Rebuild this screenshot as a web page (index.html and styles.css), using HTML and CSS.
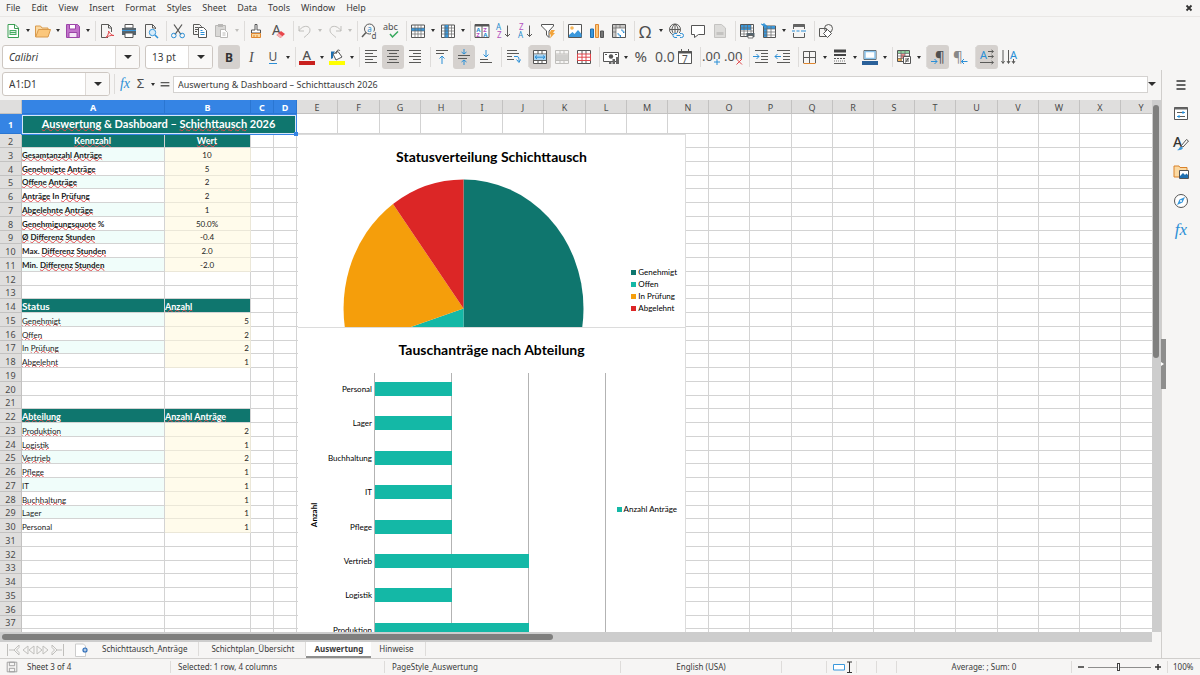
FILE: index.html
```
<!DOCTYPE html>
<html lang="en">
<head>
    <meta charset="UTF-8">
    <meta name="viewport" content="width=device-width, initial-scale=1.0">
    <title>Auswertung</title>
    <link rel="stylesheet" href="styles.css">
</head>
<body>

<nav class="menubar">
    <button>File</button>
    <button>Edit</button>
    <button>View</button>
    <button>Insert</button>
    <button>Format</button>
    <button>Styles</button>
    <button>Sheet</button>
    <button>Data</button>
    <button>Tools</button>
    <button>Window</button>
    <button>Help</button>
    <button class="close" aria-label="Close"><svg viewBox="0 0 8 8"><path class="k" d="M1.500 1.500l5 5M6.500 1.500l-5 5" stroke-width="1.800"/></svg></button>
</nav>

<!-- standard toolbar -->
<div class="toolbar">
    <button class="tool" aria-label="New"><svg viewBox="0 0 16 16"><path d="M3 1.500h7l3.500 3.500v9.500H3z" fill="#fff" stroke="#3c9f55"/><path d="M9.500 1.500v4h4" fill="none" stroke="#3c9f55"/><path d="M4.500 7h7v5h-7z" fill="#46ad62"/><path d="M5.500 8.500h5M5.500 10.500h5" stroke="#fff" stroke-width=".8"/></svg></button><button class="drop" aria-label="New menu"></button>
    <button class="tool" aria-label="Open"><svg viewBox="0 0 16 16"><path d="M.500 14V3h5l1.500 2h6v2" fill="#fbd9a2" stroke="#d99a4c"/><path d="M.700 14L3.500 6.500h12L13 14z" fill="#fbc77c" stroke="#d99a4c"/></svg></button><button class="drop" aria-label="Open menu"></button>
    <button class="tool" aria-label="Save"><svg viewBox="0 0 16 16"><path d="M1.500 1.500h11l2 2v11h-13z" fill="#c273cb" stroke="#9c45a8"/><path d="M4.500 1.500h6v4.500h-6z" fill="#fff" stroke="#9c45a8"/><path d="M4 9.500h8v5H4z" fill="#f5e5f7" stroke="#9c45a8"/></svg></button><button class="drop" aria-label="Save menu"></button>
    <i class="sep"></i>
    <button class="tool" aria-label="Export as PDF"><svg viewBox="0 0 16 16"><path class="g" d="M9 14.500H2.500v-13h7l3 3V9M9.500 1.500v3.500h3"/><path d="M7 14.500c2-2 3-5 2.500-6.500C11 11 13 12.500 15 12.500c-3-.500-6 .500-8 2z" fill="none" stroke="#e0474c"/></svg></button>
    <button class="tool" aria-label="Print"><svg viewBox="0 0 16 16"><path d="M4 1.500h8V5H4z" fill="#fff" stroke="#555"/><path d="M1 5h14v7H1z" fill="#56646d"/><path d="M1 7.500h14" stroke="#3a98dc"/><path d="M4 10h8v4.500H4z" fill="#fff" stroke="#555"/></svg></button>
    <button class="tool" aria-label="Print Preview"><svg viewBox="0 0 16 16"><path class="g" d="M12.500 6V4.500l-3-3h-7v13H8M9.500 1.500v3.500h3"/><circle cx="9.500" cy="9.500" r="3.200" fill="#d7ecfa" stroke="#3a98dc"/><path class="b" d="M12 12l3 3" stroke-width="1.500"/></svg></button>
    <i class="sep"></i>
    <button class="tool" aria-label="Cut"><svg viewBox="0 0 16 16"><path class="g" d="M4 1.500l7 10M12 1.500L5 11.500" stroke-width="1.300"/><circle class="b" cx="3.800" cy="12.500" r="2.300"/><circle class="b" cx="12.200" cy="12.500" r="2.300"/></svg></button>
    <button class="tool" aria-label="Copy"><svg viewBox="0 0 16 16"><path class="g" d="M6 11.500H1.500v-10h6l2 2V4M3 4.500h3M3 6.500h3M3 8.500h2"/><path d="M6.500 4.500h5l3 3v7h-8z" fill="#fff" stroke="#555"/><path class="b" d="M8.500 9.500h4M8.500 11.500h4M8.500 7.500h2"/></svg></button>
    <button class="tool" aria-label="Paste" disabled><svg viewBox="0 0 16 16"><path d="M1.500 2.500h10v11h-10z" fill="#d9d8d6" stroke="#b9b8b6"/><path d="M4 1h5v3H4z" fill="#b9b8b6"/><path d="M6.500 6.500h4l3 3v5h-7z" fill="#fff" stroke="#b9b8b6"/><path d="M8.500 10h3M8.500 12h3" stroke="#b9b8b6"/></svg></button><button class="drop off" aria-label="Paste menu" disabled></button>
    <i class="sep"></i>
    <button class="tool" aria-label="Clone Formatting"><svg viewBox="0 0 16 16"><path d="M7 1.500h2V7h3.500v3h-9V7H7z" fill="#fff" stroke="#555"/><path d="M3.500 10.500h9v4h-9z" fill="#fbd9a2" stroke="#e0872f"/><path d="M6 12v2M9 12v2" stroke="#e0872f"/></svg></button>
    <button class="tool" aria-label="Clear Formatting"><svg viewBox="0 0 16 16"><text class="h" x="2" y="12" font-size="14">A</text><path d="M6.500 12l4.500-4 4 3-4.500 4z" fill="#e8474c"/><path d="M6.500 12l2-1.700 4 3-2 1.700z" fill="#f7b0b2"/></svg></button>
    <i class="sep"></i>
    <button class="tool" aria-label="Undo" disabled><svg viewBox="0 0 16 16"><path class="o" d="M2 3v5h5M2 8c3-6 11-6 11-1 0 3-2 4-6 7.500"/></svg></button><button class="drop off" aria-label="Undo menu" disabled></button>
    <button class="tool" aria-label="Redo" disabled><svg viewBox="0 0 16 16"><path class="o" d="M14 3v5H9M14 8C11 2 3 2 3 7c0 3 2 4 6 7.500"/></svg></button><button class="drop off" aria-label="Redo menu" disabled></button>
    <i class="sep"></i>
    <button class="tool" aria-label="Find and Replace"><svg viewBox="0 0 16 16"><circle class="g" cx="8.500" cy="6" r="5"/><path class="g" d="M5 9.500l-4 4.500" stroke-width="1.500"/><text x="6.200" y="8.500" font-size="8" fill="#1e8bcd">a</text><path d="M10 8.500h6V16h-6z" fill="#f6f5f4"/><text class="h" x="10.500" y="15.500" font-size="8">d</text></svg></button>
    <button class="tool" aria-label="Spelling"><svg viewBox="0 0 16 16"><text class="h" x="0" y="7" font-size="9">abc</text><path d="M7 11l2.500 3L15 8.500" fill="none" stroke="#35a85c" stroke-width="1.500"/></svg></button>
    <i class="sep"></i>
    <button class="tool" aria-label="Row"><svg viewBox="0 0 16 16"><path d="M1.500 2h13v12.500h-13z" fill="#fff" stroke="#555"/><path d="M1.500 5h13v3h-13z" fill="#3a98dc"/><path class="t" d="M1.500 5h13M1.500 8h13M1.500 11h13M5 2v12.500M8 2v12.500M11 2v12.500"/></svg></button><button class="drop" aria-label="Row menu"></button>
    <button class="tool" aria-label="Column"><svg viewBox="0 0 16 16"><path d="M1.500 2h13v12.500h-13z" fill="#fff" stroke="#555"/><path d="M4.500 2h4v12.500h-4z" fill="#3a98dc"/><path class="t" d="M1.500 5h13M1.500 8h13M1.500 11h13M5 2v12.500M8.500 2v12.500M11.500 2v12.500"/></svg></button><button class="drop" aria-label="Column menu"></button>
    <i class="sep"></i>
    <button class="tool" aria-label="Sort"><svg viewBox="0 0 16 16"><path d="M1 1.500h14v13H1z" fill="#fff" stroke="#555"/><path d="M1 1h14v2.500H1z" fill="#555"/><path class="g" d="M8 3v12"/><g font-size="6" font-weight="bold"><text x="2.300" y="8.800" fill="#1e8bcd">A</text><text x="2.300" y="14" fill="#b452be">Z</text><text x="9.300" y="8.800" fill="#b452be">Z</text><text x="9.300" y="14" fill="#1e8bcd">A</text></g></svg></button>
    <button class="tool" aria-label="Sort Ascending"><svg viewBox="0 0 16 16"><text x="0" y="7" font-size="8" fill="#1e8bcd">A</text><text x="1" y="15" font-size="8" fill="#b452be">Z</text><path class="g" d="M11.500 2.500v11M9 11l2.500 2.500L14 11"/></svg></button>
    <button class="tool" aria-label="Sort Descending"><svg viewBox="0 0 16 16"><text x="1" y="7" font-size="8" fill="#b452be">Z</text><text x="0" y="15" font-size="8" fill="#1e8bcd">A</text><path class="g" d="M11.500 2.500v11M9 11l2.500 2.500L14 11"/></svg></button>
    <button class="tool" aria-label="AutoFilter"><svg viewBox="0 0 16 16"><path d="M1.500 1.500h12V3L9 8v6.500L6.500 12V8l-5-5z" fill="#fff" stroke="#555"/><path d="M11 7h4l-2 3h2l-5 5.500 1-4H9z" fill="#f2a33a"/></svg></button>
    <i class="sep"></i>
    <button class="tool" aria-label="Image"><svg viewBox="0 0 16 16"><path d="M1.500 1.500h13v13h-13z" fill="#fff" stroke="#555"/><circle cx="5" cy="5" r="1.800" fill="#f7b75c"/><path d="M2 14v-2l3.500-3 2 2L11 7l3.500 4v3z" fill="#3a98dc"/></svg></button>
    <button class="tool" aria-label="Chart"><svg viewBox="0 0 16 16"><path d="M1.500 6h3v8.500h-3z" fill="#3a98dc" stroke="#1e6fb0"/><path d="M6.500 1.500h3v13h-3z" fill="#fbc77c" stroke="#e0872f"/><path d="M11.500 8h3v6.500h-3z" fill="#777" stroke="#555"/></svg></button>
    <button class="tool" aria-label="Pivot Table"><svg viewBox="0 0 16 16"><path d="M1.500 1.500h13v13h-13z" fill="#fff" stroke="#555"/><path d="M2 2h12v3H5v9H2z" fill="#c9c8c6"/><path class="t" d="M5 1.500v13M1.500 5h13M1.500 9h3.500M9 1.500V5"/><path class="b" d="M7 10c0 2 1 3 3 3M8.500 11.500L10 13l-1.500 1.500M10 7c2 0 3 1 3 3M11.500 8.500L13 10"/></svg></button>
    <i class="sep"></i>
    <button class="tool" aria-label="Special Character"><svg viewBox="0 0 16 16"><text class="h" x="1" y="14.500" font-size="17">Ω</text></svg></button><button class="drop" aria-label="Special Character menu"></button>
    <button class="tool" aria-label="Hyperlink"><svg viewBox="0 0 16 16"><circle class="g" cx="7" cy="6.500" r="5.500"/><path class="g" d="M1.500 6.500h11M7 1v11M7 1C3 4 3 9 7 12M7 1c4 3 4 8 0 11"/><path d="M5 10h11v5H5z" fill="#f6f5f4"/><path class="b" d="M9 10.500H7a2 2 0 000 4h2M12 10.500h1.500a2 2 0 010 4H12M8.500 12.500h4"/></svg></button>
    <button class="tool" aria-label="Comment"><svg viewBox="0 0 16 16"><path d="M1.500 2.500h13v9H8.500l-4 3v-3h-3z" fill="#fff" stroke="#555"/></svg></button>
    <button class="tool" aria-label="Headers and Footers" disabled><svg viewBox="0 0 16 16"><path d="M2.500 1.500h7l4 3.500v9.500h-11z" fill="#dddcda" stroke="#c4c3c1"/><path d="M4.500 9h7v3h-7z" fill="#c4c3c1"/></svg></button>
    <i class="sep"></i>
    <button class="tool" aria-label="Define Print Area"><svg viewBox="0 0 16 16"><path d="M1.500 1.500h13v12h-13z" fill="#fff" stroke="#555"/><path d="M2 2h10v5H2z" fill="#3a98dc"/><path class="t" d="M1.500 5h13M1.500 8h13M1.500 11h13M5 1.500v12M8.500 1.500v12M12 1.500v12"/><path d="M7.500 10h8v4h-8z" fill="#56646d"/><path d="M9 12.500h5V15H9z" fill="#fff" stroke="#555" stroke-width=".8"/></svg></button>
    <button class="tool" aria-label="Freeze Rows and Columns"><svg viewBox="0 0 16 16"><path d="M2.500 3h12v11.500h-12z" fill="#fff" stroke="#555"/><path d="M3 3h11v3H6v8H3z" fill="#3a98dc"/><path class="t" d="M2.500 6h12M2.500 9h12M2.500 12h12M6 3v11.500M10 3v11.500"/><path class="b" d="M3 0v4M1 2h4M0 1l6 2"/></svg></button><button class="drop" aria-label="Freeze menu"></button>
    <button class="tool" aria-label="Split Window"><svg viewBox="0 0 16 16"><path class="g" d="M2.500 6V1.500h11V6M2.500 10v4.500h11V10"/><path d="M2.500 1.500h11V4h-11z" fill="#666"/><path class="b" d="M1 8h3M5.500 8h3M10 8h5"/></svg></button>
    <i class="sep"></i>
    <button class="tool" aria-label="Show Draw Functions"><svg viewBox="0 0 16 16"><path class="g" d="M1.500 5.500h7v8h-7z"/><circle class="g" cx="10.500" cy="5.500" r="4"/><path d="M9.500 6.500l4 4-4 4-4-4z" fill="#fff" stroke="#555"/></svg></button>
</div>

<!-- formatting toolbar -->
<div class="toolbar">
    <div class="combo font-name"><input type="text" value="Calibri" aria-label="Font Name"><button aria-label="Font list"></button></div>
    <div class="combo font-size"><input type="text" value="13 pt" aria-label="Font Size"><button aria-label="Size list"></button></div>
    <button class="tool on" aria-label="Bold"><svg viewBox="0 0 16 16"><text x="4" y="12.500" font-size="12" font-weight="bold" fill="#333">B</text></svg></button>
    <button class="tool" aria-label="Italic"><svg viewBox="0 0 16 16"><text class="h serif" x="6" y="12.500" font-size="14" font-style="italic">I</text></svg></button>
    <button class="tool" aria-label="Underline"><svg viewBox="0 0 16 16"><text class="h" x="3.500" y="12" font-size="12">U</text><path class="b" d="M4 14.500h8"/></svg></button><button class="drop" aria-label="Underline menu"></button>
    <i class="sep"></i>
    <button class="tool" aria-label="Font Color"><svg viewBox="0 0 16 16"><text class="h" x="3.500" y="10.500" font-size="13" font-weight="500">A</text><path d="M0 12h16v4H0z" fill="#c9211e"/></svg></button><button class="drop" aria-label="Font Color menu"></button>
    <button class="tool" aria-label="Background Color"><svg viewBox="0 0 16 16"><path d="M4 5l5-2.500L13 8l-6 3z" fill="#fff" stroke="#555"/><path class="g" d="M7 5c0-4 3-5 4-3"/><path d="M2 2.500h4L4 5v4L2 10z" fill="#1e6fb0"/><path d="M0 12h16v4H0z" fill="#ffff00"/></svg></button><button class="drop" aria-label="Background Color menu"></button>
    <i class="sep"></i>
    <button class="tool" aria-label="Align Left"><svg viewBox="0 0 16 16"><path class="g" d="M2 1.500h12M2 4.500h8M2 7.500h12M2 10.500h8M2 13.500h12"/></svg></button>
    <button class="tool on" aria-label="Align Center"><svg viewBox="0 0 16 16"><path class="g" d="M2 1.500h12M4 4.500h8M2 7.500h12M4 10.500h8M2 13.500h12"/></svg></button>
    <button class="tool" aria-label="Align Right"><svg viewBox="0 0 16 16"><path class="g" d="M2 1.500h12M6 4.500h8M2 7.500h12M6 10.500h8M2 13.500h12"/></svg></button>
    <i class="sep"></i>
    <button class="tool" aria-label="Align Top"><svg viewBox="0 0 16 16"><path class="g" d="M2 1.500h12M2 4.500h8"/><path class="b" d="M8 15V7M5.500 9.500L8 7l2.500 2.500"/></svg></button>
    <button class="tool on" aria-label="Center Vertically"><svg viewBox="0 0 16 16"><path class="g" d="M2 6.500h12M2 9.500h9"/><path class="b" d="M8 0v5M5.500 3L8 5l2.500-2M8 16v-5M5.500 13L8 11l2.500 2"/></svg></button>
    <button class="tool" aria-label="Align Bottom"><svg viewBox="0 0 16 16"><path class="g" d="M2 10.500h8M2 13.500h12"/><path class="b" d="M8 1v7M5.500 5.500L8 8l2.500-2.500"/></svg></button>
    <i class="sep"></i>
    <button class="tool" aria-label="Wrap Text"><svg viewBox="0 0 16 16"><path class="g" d="M2 1.500h10M2 4.500h12M2 7.500h5M2 10.500h7"/><path class="b" d="M9 7.500h3c2 0 2 2 2 5M11.500 10.500l2.500 3 1.500-3"/></svg></button>
    <i class="sep"></i>
    <button class="tool on" aria-label="Merge and Center Cells"><svg viewBox="0 0 16 16"><path d="M1.500 1.500h13v13h-13z" fill="#fff" stroke="#555"/><path class="g" d="M1.500 5h13M1.500 11.500h13M6 1.500V5M10 1.500V5M6 11.500v3M10 11.500v3"/><path d="M2 5.500h12v5.500H2z" fill="#a9d5f3"/><path class="b" d="M3 8.200h10M5 6.500L3 8.200 5 10M11 6.500l2 1.700L11 10"/></svg></button>
    <button class="tool" aria-label="Merge Cells" disabled><svg viewBox="0 0 16 16"><path class="o" d="M1.500 1.500h13v13h-13zM1.500 5h13M1.500 11.500h13M6 1.500V5M10 1.500V5M6 11.500v3M10 11.500v3"/><path d="M2 5.500h12v5.500H2z" fill="#d0cfcd"/></svg></button>
    <button class="tool" aria-label="Unmerge Cells"><svg viewBox="0 0 16 16"><path d="M1.500 1.500h13v13h-13z" fill="#fff" stroke="#555"/><path class="g" d="M6 1.500V5M10 1.500V5M6 11.500v3M10 11.500v3"/><path d="M1.500 5h13v6.500h-13zM6 5v6.500M10 5v6.500M1.500 8.200h13" fill="none" stroke="#e0474c"/></svg></button>
    <i class="sep"></i>
    <button class="tool" aria-label="Currency"><svg viewBox="0 0 16 16"><path d="M.500 3.500h15v9H.500z" fill="#fff" stroke="#555"/><circle cx="8" cy="7.500" r="2.200" fill="#555"/><path class="g" d="M2 5.500h2M12 5.500h2"/><path d="M9.500 10h2.500v5H9.500zM13 8h3v7h-3zM6 12h2.500v3H6z" fill="#666"/></svg></button><button class="drop" aria-label="Currency menu"></button>
    <button class="tool" aria-label="Percent"><svg viewBox="0 0 16 16"><text class="h" x="1.500" y="13" font-size="15">%</text></svg></button>
    <button class="tool" aria-label="Number"><svg viewBox="0 0 16 16"><text class="h" x="0" y="13" font-size="14" font-family="Open Sans">0.0</text></svg></button>
    <button class="tool" aria-label="Date"><svg viewBox="0 0 16 16"><path d="M1.500 2.500h13v12h-13z" fill="#fff" stroke="#555"/><path d="M1.500 2h13v2.500h-13z" fill="#555"/><path class="g" d="M4.500 0v3M11.500 0v3"/><text class="h" x="5" y="13.500" font-size="10">7</text></svg></button>
    <i class="sep"></i>
    <button class="tool" aria-label="Add Decimal Place"><svg viewBox="0 0 16 16"><text class="h" x="-2" y="12" font-size="13">.00</text><path d="M10 10h6v6h-6z" fill="#f6f5f4"/><path class="b" d="M13 10v6M10 13h6"/></svg></button>
    <button class="tool" aria-label="Delete Decimal Place"><svg viewBox="0 0 16 16"><text class="h" x="-2" y="12" font-size="13">.00</text><path d="M10 10h6v6h-6z" fill="#f6f5f4"/><path d="M10.500 10l5.500 5.500M16 10l-5.500 5.500" stroke="#e0474c"/></svg></button>
    <i class="sep"></i>
    <button class="tool" aria-label="Increase Indent"><svg viewBox="0 0 16 16"><path class="g" d="M2 1.500h13M8 4.500h7M8 7.500h7M8 10.500h7M2 13.500h13"/><path class="b" d="M0 7.500h6M3.500 5L6 7.500 3.500 10"/></svg></button>
    <button class="tool" aria-label="Decrease Indent"><svg viewBox="0 0 16 16"><path class="g" d="M2 1.500h13M8 4.500h7M8 7.500h7M8 10.500h7M2 13.500h13"/><path class="b" d="M0 7.500h6M2.500 5L0 7.500 2.500 10"/></svg></button>
    <i class="sep"></i>
    <button class="tool" aria-label="Borders"><svg viewBox="0 0 16 16"><path class="g" d="M1.500 14V2.500h12V14M7.500 2.500v12M1.500 8.500h12"/><path d="M1.500 14.500h12" stroke="#e0872f"/></svg></button><button class="drop" aria-label="Borders menu"></button>
    <button class="tool" aria-label="Border Style"><svg viewBox="0 0 16 16"><path d="M2 2h12" stroke="#444" stroke-width="3"/><path d="M2 6h12" stroke="#444" stroke-width="2"/><path d="M2 9.500h12" stroke="#555" stroke-dasharray="2 1"/><path class="g" d="M2 14.500h12"/><path d="M2 12h12" stroke="#777" stroke-dasharray="1 1"/></svg></button><button class="drop" aria-label="Border Style menu"></button>
    <button class="tool" aria-label="Border Color"><svg viewBox="0 0 16 16"><path d="M2 1.500h12v9H2z" fill="#fff" stroke="#555"/><path d="M3 2.500h10v7H3z" fill="none" stroke="#8cc4ec" stroke-width="1.500"/><path d="M0 12h16v4H0z" fill="#2a6099"/></svg></button><button class="drop" aria-label="Border Color menu"></button>
    <i class="sep"></i>
    <button class="tool" aria-label="Conditional Formatting"><svg viewBox="0 0 16 16"><path d="M1.500 1.500h12v11h-12z" fill="#fff" stroke="#555"/><path d="M2 2h11v2.500H2z" fill="#8fd0a0"/><path d="M5 5h4v4H5z" fill="#f08a8c"/><path d="M2 9h4v3H2z" fill="#f7b75c"/><path class="t" d="M1.500 4.500h12M1.500 7h12M1.500 9.500h12M5 1.500v11M9 1.500v11"/><path d="M7.500 7.500h7v7h-7z" fill="#fff" stroke="#555"/><path class="g" d="M9 10h4M9 12h4M12.500 9l-3 4.500"/></svg></button><button class="drop" aria-label="Conditional menu"></button>
    <i class="sep"></i>
    <button class="tool on" aria-label="Left-To-Right"><svg viewBox="0 0 16 16"><text class="h" x="5" y="12.500" font-size="15">¶</text><path class="b" d="M1 12.500h6M4.500 10L7 12.500 4.500 15"/></svg></button>
    <button class="tool" aria-label="Right-To-Left"><svg viewBox="0 0 16 16"><text x="1" y="12.500" font-size="15" fill="#888">¶</text><path class="b" d="M9.500 12.500h6M12 10l-2.500 2.500L12 15"/></svg></button>
    <i class="sep"></i>
    <button class="tool on" aria-label="Text direction from left to right"><svg viewBox="0 0 16 16"><text x="1" y="10" font-size="11" fill="#2b8fd6">A</text><path class="g" d="M9 2.500h5M9 7.500h5M1 13.500h13M12.500 1l2 1.500-2 1.500M12.500 6l2 1.500-2 1.500M12.500 12l2 1.500-2 1.500"/></svg></button>
    <button class="tool" aria-label="Text direction from top to bottom"><svg viewBox="0 0 16 16"><text x="9" y="9.500" font-size="11" fill="#2b8fd6">A</text><path class="g" d="M2 1v13M7.500 1v13M12.500 10v4M.500 12L2 14.500 3.500 12M6 12l1.500 2.500L9 12M11 12l1.500 2.500L14 12"/></svg></button>
</div>

<div class="work">
    <main class="document">
        <div class="formula-bar">
            <div class="combo name-box"><input type="text" value="A1:D1" aria-label="Name Box"><button aria-label="Name list"></button></div>
            <i class="sep"></i>
            <button class="fbtn fx" aria-label="Function Wizard">fx</button>
            <button class="fbtn" aria-label="Select Function"><svg viewBox="0 0 16 16"><text class="h" x="3" y="13" font-size="15">Σ</text></svg></button><button class="drop" aria-label="Function menu"></button>
            <button class="fbtn" aria-label="Formula"><svg viewBox="0 0 16 16"><path class="g" d="M3 6.500h10M3 10h10" stroke-width="1.500"/></svg></button>
            <input class="formula" type="text" value="Auswertung &amp; Dashboard – Schichttausch 2026" aria-label="Input line">
            <button class="drop wide" aria-label="Expand Formula Bar"></button>
        </div>

        <div class="grid-row">
            <div class="sheet">
                <table id="sheet"></table>
                <div class="selection"></div>

                <section class="chart chart-pie">
                    <h3>Statusverteilung Schichttausch</h3>
                    <svg class="plot" width="387" height="192">
                        <path d="M165.500 44.500A120 129 0 0 1 165.500 302.500z" fill="#0f766e"/>
                        <path d="M165.500 173.500V302.500A120 129 0 0 1 51.500 213.500z" fill="#14b8a6"/>
                        <path d="M165.500 173.500L51.500 213.500A120 129 0 0 1 95 69z" fill="#f59e0b"/>
                        <path d="M165.500 173.500L95 69A120 129 0 0 1 165.500 44.500z" fill="#dc2626"/>
                    </svg>
                    <ul class="legend">
                        <li class="teal">Genehmigt</li>
                        <li class="mint">Offen</li>
                        <li class="amber">In Prüfung</li>
                        <li class="red">Abgelehnt</li>
                    </ul>
                </section>

                <section class="chart chart-bar">
                    <h3>Tauschanträge nach Abteilung</h3>
                    <svg class="plot" width="387" height="310" id="bars"></svg>
                    <ul class="legend">
                        <li class="mint">Anzahl Anträge</li>
                    </ul>
                </section>
            </div>
            <div class="vscroll"><div class="thumb"></div></div>
        </div>
        <div class="hscroll"><div class="thumb"></div></div>

        <div class="tabs">
            <div class="tab-nav">
                <button aria-label="First sheet"><svg viewBox="0 0 14 14"><path class="o" d="M1.500 1v12M13 2L8 7l5 5V9.500L10.500 7 13 4.500zM8 7H3"/></svg></button>
                <button aria-label="Previous sheet"><svg viewBox="0 0 14 14"><path class="o" d="M7 3L2 7l5 4zM13 3L8 7l5 4z"/></svg></button>
                <button aria-label="Next sheet"><svg viewBox="0 0 14 14"><path class="o" d="M1 3l5 4-5 4zM7 3l5 4-5 4z"/></svg></button>
                <button aria-label="Last sheet"><svg viewBox="0 0 14 14"><path class="o" d="M12.500 1v12M1 2l5 5-5 5V9.500L3.500 7 1 4.500zM6 7h5"/></svg></button>
            </div>
            <button class="add" aria-label="Add sheet"><svg viewBox="0 0 14 14"><path d="M.500 1h8l2 2v10.500h-10z" fill="#fff" stroke="#ccc"/><circle cx="10" cy="7" r="2.600" fill="#2f6fba"/><path d="M8.500 7h3M10 5.500v3" stroke="#fff" stroke-width=".8"/></svg></button>
            <a class="tab" href="#">Schichttausch_Anträge</a>
            <a class="tab" href="#">Schichtplan_Übersicht</a>
            <a class="tab active" href="#">Auswertung</a>
            <a class="tab" href="#">Hinweise</a>
        </div>
    </main>

    <aside class="sidebar">
        <button aria-label="Sidebar Settings"><svg viewBox="0 0 16 16"><path class="k" d="M3.500 4h9M3.500 8h9M3.500 12h9" stroke-width="1.500"/></svg></button>
        <button aria-label="Properties"><svg viewBox="0 0 16 16"><path d="M1.500 1.500h13v12h-13z" fill="#fff" stroke="#555"/><path d="M1.500 1.500h13v2h-13z" fill="#666"/><path class="g" d="M4 6.500h5M7 10.500h5"/><path class="b" d="M9 6.500h3M10 5v3M4 10.500h3M6 9v3"/></svg></button>
        <button aria-label="Styles"><svg viewBox="0 0 16 16"><text x="0" y="12" font-size="14" font-weight="500" fill="#333">A</text><path d="M8 11l5.500-6.500 2 1.500L10 12z" fill="#fff" stroke="#555"/><path d="M4 15c2 0 2-3 4-3.500l2 1.500c-1 2-4 2.500-6 2z" fill="#3a98dc"/></svg></button>
        <button aria-label="Gallery"><svg viewBox="0 0 16 16"><path d="M1 13V2h5l1 1.500h7V13z" fill="#fbd9a2" stroke="#d9822b"/><path d="M6.500 6.500h9v8h-9z" fill="#fff" stroke="#555"/><path d="M7 14v-2l3-3 2 2 1.500-1.500L15 11v3z" fill="#1e6fb0"/></svg></button>
        <button aria-label="Navigator"><svg viewBox="0 0 16 16"><circle cx="8" cy="8" r="6.500" fill="#fff" stroke="#555"/><path d="M12 4L9.500 9.500 4 12l2.500-5.500z" fill="#3a98dc"/><circle cx="8" cy="8" r="1" fill="#fff"/></svg></button>
        <button class="fx" aria-label="Functions">fx</button>
        <div class="handle"></div>
    </aside>
</div>

<footer class="statusbar">
    <span class="save-state"><svg viewBox="0 0 16 16"><path d="M2.500 2.500h11v11h-11zM5 2.500h6v4H5zM5 9.500h6v4H5z" fill="none" stroke="#999"/></svg></span>
    <span class="s-sheet">Sheet 3 of 4</span>
    <span class="s-selected">Selected: 1 row, 4 columns</span>
    <span class="s-style">PageStyle_Auswertung</span>
    <span class="s-lang">English (USA)</span>
    <span class="s-insert"></span>
    <span class="s-mode"><svg viewBox="0 0 20 12"><path d="M.500 3.500h11v5.500H.500z" fill="#fff" stroke="#3a98dc"/><path class="k" d="M14 1h5M14 11.500h5M16.500 1v10.500"/></svg></span>
    <span class="s-cell"></span>
    <span class="s-cell"></span>
    <span class="s-sum">Average: ; Sum: 0</span>
    <span class="s-zoom">
        <button aria-label="Zoom out"><svg viewBox="0 0 8 8"><path class="k" d="M1 4h6" stroke-width="1.500"/></svg></button>
        <input type="range" min="0" max="100" value="49" aria-label="Zoom">
        <button aria-label="Zoom in"><svg viewBox="0 0 8 8"><path class="k" d="M1 4h6M4 1v6" stroke-width="1.500"/></svg></button>
    </span>
    <span class="s-percent">100%</span>
</footer>

<script src="script.js"></script>
</body>
</html>
```

FILE: styles.css
```
* {
    margin: 0;
    padding: 0;
    box-sizing: border-box;
}

body {
    display: flex;
    flex-direction: column;
    height: 100vh;
    overflow: hidden;
    background: #f6f5f4;
    color: #3a3a3a;
    font-family: 'Noto Sans', sans-serif;
    font-size: 9px;
    line-height: 12px;
}

button, input {
    border: none;
    background: none;
    font: inherit;
    color: inherit;
    outline: none;
}

button {
    display: flex;
    align-items: center;
    justify-content: center;
    flex: none;
}

svg {
    display: block;
    overflow: visible;
    font-family: 'Noto Sans', sans-serif;
}

/* icon strokes */
.g { fill: none; stroke: #5a5a58; }
.b { fill: none; stroke: #2b8fd6; }
.o { fill: none; stroke: #c0bfbc; }
.k { fill: none; stroke: #333; }
.t { fill: none; stroke: #666; stroke-width: 0.7px; }
.h { fill: #505050; }
.serif { font-family: 'Liberation Serif', serif; }

/* menu */
.menubar {
    display: flex;
    align-items: center;
    gap: 11px;
    height: 17px;
    padding: 0 7px 0 6px;
    border-bottom: 1px solid #e9e7e5;
}

.menubar .close {
    margin-left: auto;
}

.close svg {
    width: 8px;
    height: 8px;
}

/* toolbars */
.toolbar {
    display: flex;
    align-items: center;
    height: 27px;
    padding-left: 2px;
    flex: none;
}

.toolbar + .toolbar {
    height: 26px;
}

.tool {
    width: 22px;
    height: 24px;
    border-radius: 3px;
}

.tool svg {
    width: 16px;
    height: 16px;
}

.tool.on {
    background: #d5d1ce;
}

.drop {
    width: 8px;
    height: 24px;
}

.drop::before, .combo button::before {
    content: "";
    border: 2px solid transparent;
    border-top: 3px solid #2e2e2e;
    border-bottom: none;
}

.drop.off::before {
    border-top-color: #c0bfbc;
}

.combo button::before, .drop.wide::before {
    border-width: 4px 4px 0;
}

.sep {
    flex: none;
    width: 5px;
    height: 20px;
    border-right: 1px solid #dedcda;
}

.drop + .sep {
    width: 4px;
}

.combo {
    display: flex;
    flex: none;
    height: 24px;
    border: 1px solid #cdc7c2;
    border-radius: 3px;
    background: #fff;
    overflow: hidden;
}

.combo input {
    flex: 1;
    min-width: 0;
    padding: 0 6px;
    font-size: 10px;
}

.combo button {
    width: 24px;
    border-left: 1px solid #dedad7;
    background: #f9f8f7;
}

.font-name {
    width: 138px;
    margin-right: 5px;
}

.font-name input {
    font-style: italic;
}

.font-size {
    width: 68px;
    margin-right: 5px;
}

/* main area */
.work {
    display: flex;
    flex: 1;
    min-height: 0;
}

.document {
    display: flex;
    flex-direction: column;
    flex: 1;
    min-width: 0;
    border-right: 1px solid #d0cecc;
}

.formula-bar {
    display: flex;
    align-items: center;
    height: 30px;
    padding: 0 5px 2px 2px;
    flex: none;
}

.name-box {
    width: 108px;
}

.fbtn {
    width: 16px;
    height: 22px;
}

.formula-bar .sep {
    margin-right: 2px;
}

.fbtn svg {
    width: 14px;
    height: 14px;
}

.fx {
    color: #2b8fd6;
    font-family: 'Liberation Serif', serif;
    font-size: 14px;
    font-style: italic;
}

.formula {
    flex: 1;
    min-width: 0;
    height: 17px;
    padding: 0 4px;
    border: 1px solid #d4d2d0;
    background: #fff;
}

.grid-row {
    display: flex;
    flex: 1;
    min-height: 0;
}

.sheet {
    position: relative;
    flex: 1;
    min-width: 0;
    overflow: hidden;
    background: #fff;
}

table {
    table-layout: fixed;
    width: 0;
    border-collapse: separate;
    border-spacing: 0;
}

.c-head { width: 22px; }
.c-a { width: 143px; }
.c-b { width: 86px; }
.c-cd { width: 23px; }
.c-std { width: 41px; }
.c-wide { width: 42px; }

th, td {
    height: 14px;
    padding: 0 1px 0 0;
    border-right: 1px solid #d3d3d3;
    border-bottom: 1px solid #d3d3d3;
    white-space: nowrap;
    overflow: hidden;
}

th {
    padding: 1px 0 0;
    background: #dfdedd;
    border-color: #c3c2c1;
    color: #4a4a4a;
    font-weight: normal;
    line-height: 11px;
    text-align: center;
}

th.sel {
    background: #3584e4;
    border-color: #2a76d2;
    color: #fff;
    font-weight: bold;
}

td {
    font-family: 'Lato', sans-serif;
    font-size: 8px;
    color: #1c1c1c;
    line-height: 12px;
}

.short th, .short td {
    height: 13px;
}

.tall th, .tall td {
    height: 20px;
}

.title {
    background: #0f766e;
    color: #fff;
    font-size: 11px;
    font-weight: bold;
    text-align: center;
}

.head {
    background: #0f766e;
    color: #fff;
    font-size: 9px;
    font-weight: bold;
}

.big { font-size: 10px; }
.light { background: #f0fdfa; }
.cream { background: #fffbeb; border-color: #ebe7d8; }
.center { text-align: center; }
.right { text-align: right; }
.strong { font-weight: bold; }

.low {
    padding-top: 2px;
    line-height: 10px;
}

.typo {
    text-decoration: underline wavy #e5484d 1px;
    text-underline-offset: -1px;
    text-decoration-skip-ink: none;
}

.selection {
    position: absolute;
    left: 21px;
    top: 14px;
    width: 276px;
    height: 21px;
    border: 1px solid #3584e4;
    box-shadow: inset 0 0 0 1px #d5e6fb;
}

.selection::after {
    content: "";
    position: absolute;
    right: -2px;
    bottom: -2px;
    width: 4px;
    height: 4px;
    background: #3584e4;
}

/* charts float over the cells */
.chart {
    position: absolute;
    left: 298px;
    width: 388px;
    border: 1px solid #dcdcdc;
    border-left: none;
    background: #fff;
    color: #000;
    font-family: 'Lato', sans-serif;
    font-size: 8px;
    overflow: hidden;
}

.chart-pie {
    top: 34px;
    height: 194px;
}

.chart-bar {
    top: 227px;
    height: 340px;
}

.chart h3 {
    position: absolute;
    top: 12px;
    width: 100%;
    font-size: 14px;
    line-height: 20px;
    text-align: center;
}

.plot text {
    font-family: 'Lato', sans-serif;
    font-size: 8px;
}

.legend {
    position: absolute;
    right: 8px;
    list-style: none;
}

.chart-pie .legend {
    top: 131px;
}

.chart-bar .legend {
    top: 175px;
}

.legend li {
    display: flex;
    align-items: center;
    gap: 2px;
}

.legend li::before {
    content: "";
    width: 5px;
    height: 5px;
    background: currentColor;
}

.legend .teal::before { background: #0f766e; }
.legend .mint::before { background: #14b8a6; }
.legend .amber::before { background: #f59e0b; }
.legend .red::before { background: #dc2626; }

/* scrollbars */
.vscroll {
    width: 9px;
    padding: 5px 2px 0 1px;
    background: #cdcdcd;
}

.vscroll .thumb {
    height: 48%;
    border-radius: 3px;
    background: #7f7f7e;
}

.hscroll {
    height: 10px;
    margin-right: 9px;
    padding: 2px;
    background: #cdcdcd;
    flex: none;
}

.hscroll .thumb {
    width: 48%;
    height: 6px;
    border-radius: 3px;
    background: #7f7f7e;
}

/* sheet tabs */
.tabs {
    display: flex;
    height: 16px;
    padding-left: 5px;
    font-size: 8px;
    flex: none;
}

.tab-nav {
    display: flex;
    align-items: center;
    width: 69px;
}

.tab-nav button {
    width: 15px;
}

.tab-nav svg, .add svg {
    width: 14px;
    height: 14px;
}

.add {
    width: 16px;
}

.tab {
    display: flex;
    align-items: center;
    height: 14px;
    padding: 0 11px 0 12px;
    border-right: 1px solid #dedcda;
    color: inherit;
    text-decoration: none;
}

.tab.active {
    height: 16px;
    padding: 0 8px;
    border-right: none;
    border-bottom: 2px solid #8e8e8d;
    background: #fff;
    font-weight: bold;
}

.tab.active + .tab {
    padding-left: 8px;
}

/* sidebar */
.sidebar {
    position: relative;
    display: flex;
    flex-direction: column;
    align-items: center;
    width: 38px;
}

.sidebar button {
    width: 24px;
    height: 29px;
}

.sidebar svg {
    width: 16px;
    height: 16px;
}

.sidebar .fx {
    font-size: 17px;
}

.handle {
    position: absolute;
    left: -1px;
    top: 269px;
    display: flex;
    align-items: center;
    width: 5px;
    height: 50px;
    background: #8e8e8d;
}

.handle::before {
    content: "";
    border: 2px solid transparent;
    border-left: 3px solid #fff;
    border-right: none;
}

/* status bar */
.statusbar {
    display: flex;
    align-items: center;
    height: 17px;
    border-top: 1px solid #d0cecc;
    font-size: 8px;
    flex: none;
}

.statusbar span {
    display: flex;
    align-items: center;
    height: 12px;
    padding: 0 7px;
    border-right: 1px solid #dedcda;
    white-space: nowrap;
}

.statusbar .save-state {
    width: 20px;
    padding: 0 0 0 5px;
    border: none;
}

.save-state svg {
    width: 14px;
    height: 14px;
}

.s-sheet { width: 151px; }
.s-selected { width: 214px; }
.s-style { width: 236px; }
.s-lang { flex: 1; justify-content: center; }
.s-insert { width: 45px; }
.statusbar .s-mode { width: 30px; padding: 0 6px; }

.s-mode svg {
    width: 20px;
    height: 12px;
}

.s-cell { width: 20px; }
.s-sum { width: 175px; justify-content: center; }
.statusbar .s-zoom { width: 96px; padding: 0 4px; gap: 2px; }
.statusbar .s-percent { width: 32px; padding: 0 5px; border: none; }

.s-zoom button, .s-zoom svg {
    width: 8px;
    height: 8px;
}

.s-zoom button {
    width: 10px;
}

input[type=range] {
    flex: 1;
    min-width: 0;
    height: 10px;
    appearance: none;
}

input[type=range]::-webkit-slider-runnable-track {
    height: 1px;
    background: #8e8e8d;
}

input[type=range]::-webkit-slider-thumb {
    appearance: none;
    width: 3px;
    height: 8px;
    margin-top: -4px;
    border: 1px solid #444;
    background: #fff;
}
```

FILE: script.js
```
// ~word marks a word the spell checker underlines
const kpis = [
    ['~Gesamtanzahl ~Anträge', '10'],
    ['~Genehmigte ~Anträge', '5'],
    ['~Offene ~Anträge', '2'],
    ['~Anträge In ~Prüfung', '2'],
    ['~Abgelehnte ~Anträge', '1'],
    ['~Genehmigungsquote %', '50.0%'],
    ['~Ø ~Differenz ~Stunden', '-0.4'],
    ['Max. ~Differenz ~Stunden', '2.0'],
    ['Min. ~Differenz ~Stunden', '-2.0']
];
const statuses = [['~Genehmigt', 5], ['~Offen', 2], ['In ~Prüfung', 2], ['~Abgelehnt', 1]];
const departments = [['~Produktion', 2], ['~Logistik', 1], ['~Vertrieb', 2], ['~Pflege', 1],
    ['IT', 1], ['~Buchhaltung', 1], ['Lager', 1], ['Personal', 1]];

const ROWS = 60;
const COLS = 26;
const cells = {};

function mark(text) {
    return String(text).replace(/~(\S+)/g, '<span class="typo">$1</span>');
}

function fill(start, head, list, labelClass, valueClass) {
    cells[start] = [['head ' + head[2], head[0]], ['head ' + head[3], head[1]]];
    list.forEach((item, i) => {
        const stripe = i % 2 === 0 ? 'light ' : '';
        cells[start + 1 + i] = [[stripe + labelClass, item[0]], ['cream ' + valueClass, item[1]]];
    });
}

fill(2, ['~Kennzahl', '~Wert', 'center', 'center'], kpis, 'strong', 'center');
fill(14, ['Status', '~Anzahl', 'big', 'low'], statuses, 'low', 'low right');
fill(22, ['~Abteilung', '~Anzahl ~Anträge', 'low', 'low'], departments, 'low', 'low right');

function drawSheet() {
    let html = '<colgroup><col class="c-head"><col class="c-a"><col class="c-b"><col class="c-cd"><col class="c-cd">';
    for (let c = 4; c < COLS; c++) {
        html += `<col class="${c % 5 === 0 ? 'c-wide' : 'c-std'}">`;
    }
    html += '</colgroup><tr><th></th>';
    for (let c = 0; c < COLS; c++) {
        html += `<th class="${c < 4 ? 'sel' : ''}">${String.fromCharCode(65 + c)}</th>`;
    }
    html += '</tr>';

    for (let r = 1; r <= ROWS; r++) {
        const size = r === 1 ? 'tall' : (r % 4 === 1 ? 'short' : '');
        html += `<tr class="${size}"><th class="${r === 1 ? 'sel' : ''}">${r}</th>`;
        let c = 0;
        if (r === 1) {
            html += `<td class="title" colspan="4">${mark('~Auswertung &amp; Dashboard – ~Schichttausch 2026')}</td>`;
            c = 4;
        } else if (cells[r]) {
            cells[r].forEach(cell => html += `<td class="${cell[0]}">${mark(cell[1])}</td>`);
            c = 2;
        }
        html += '<td></td>'.repeat(COLS - c) + '</tr>';
    }
    document.getElementById('sheet').innerHTML = html;
}

function drawBars() {
    const left = 77, unit = 77, top = 54, step = 34.4;
    let svg = '';
    for (let i = 0; i < 4; i++) {
        svg += `<path d="M${left + i * unit - 0.5} 45V310" stroke="#b3b3b3"/>`;
    }
    departments.slice().reverse().forEach((item, i) => {
        const y = Math.round(top + i * step);
        svg += `<rect x="${left}" y="${y}" width="${item[1] * unit}" height="14" fill="#14b8a6"/>`;
        svg += `<text x="${left - 3}" y="${y + 10}" text-anchor="end">${item[0].replace('~', '')}</text>`;
    });
    svg += '<text transform="translate(19 187) rotate(-90)" text-anchor="middle" font-weight="bold">Anzahl</text>';
    document.getElementById('bars').innerHTML = svg;
}

drawSheet();
drawBars();
```
